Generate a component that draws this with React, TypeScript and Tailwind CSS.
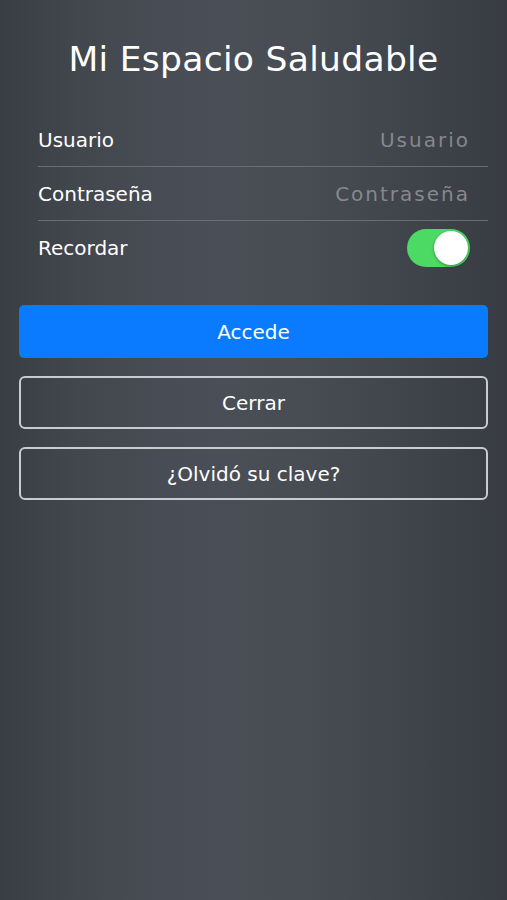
import { useState } from "react";

const Field = ({ label, placeholder, last }: { label: string; placeholder: string; last?: boolean }) => (
  <div className={`flex items-center justify-between h-[54px] ${last ? "" : "border-b border-[#6a6d72]"}`}>
    <span className="text-[20px] text-white">{label}</span>
    <span className="text-[20px] text-[#85888d] tracking-[2px] pr-[18px]">{placeholder}</span>
  </div>
);

const App = () => {
  const [remember, setRemember] = useState(true);

  return (
    <div
      className="min-h-[900px] w-full bg-[linear-gradient(90deg,#393d44_0%,#42464d_15%,#484c54_32%,#4a4e56_45%,#474b52_62%,#40444b_80%,#383b42_100%)] font-['DejaVu_Sans',sans-serif] text-white"
    >
      <h1 className="pt-[36px] text-center text-[34.5px] leading-[46px] tracking-[0.3px]">Mi Espacio Saludable</h1>

      <div className="ml-[38px] mr-[19px] mt-[31px]">
        <Field label="Usuario" placeholder="Usuario" />
        <Field label="Contraseña" placeholder="Contraseña" />
        <div className="flex items-center justify-between h-[54px]">
          <span className="text-[20px] text-white">Recordar</span>
          <button
            onClick={() => setRemember(!remember)}
            className={`mr-[18px] flex h-[38px] w-[63px] items-center rounded-full p-[2px] ${
              remember ? "justify-end bg-[#4cd964]" : "justify-start bg-[#6a6d72]"
            }`}
          >
            <span className="h-[34px] w-[34px] rounded-full bg-white shadow-[0_1px_3px_rgba(0,0,0,0.35)]" />
          </button>
        </div>
      </div>

      <div className="mx-[19px] mt-[30px] flex flex-col gap-[18px]">
        <button className="h-[53px] rounded-[5px] bg-[#0a7aff] text-[20px] text-white">Accede</button>
        <button className="h-[53px] rounded-[6px] border-2 border-[#c9cbce] text-[20px] text-white">Cerrar</button>
        <button className="h-[53px] rounded-[6px] border-2 border-[#c9cbce] text-[20px] text-white">¿Olvidó su clave?</button>
      </div>
    </div>
  );
};

export default App;
